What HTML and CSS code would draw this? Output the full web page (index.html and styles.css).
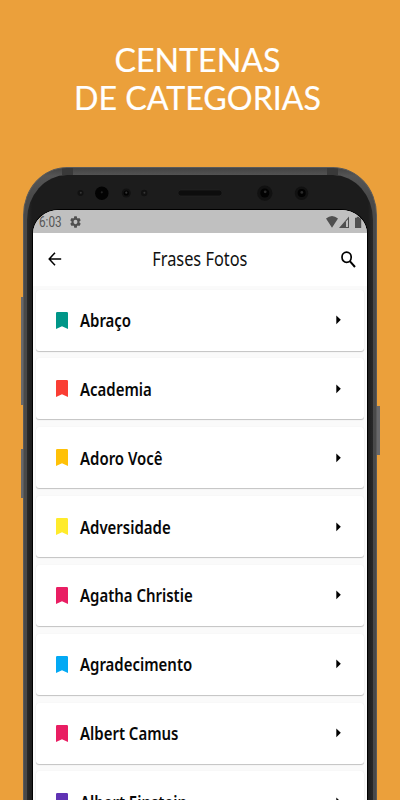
FILE: index.html
```
<!DOCTYPE html>
<html lang="pt-BR">
<head>
<meta charset="utf-8">
<title>Frases Fotos</title>
<link rel="stylesheet" href="styles.css">
</head>
<body>
<svg class="defs" aria-hidden="true">
  <symbol id="bookmark" viewBox="0 0 12 17"><path d="M1.2 0H10.8Q12 0 12 1.2V17L6 14.3L0 17V1.2Q0 0 1.2 0Z" fill="currentColor"/></symbol>
  <symbol id="caret" viewBox="0 0 5 10"><path d="M0.3 0.4L4.8 4.8L0.3 9.2Z" fill="#000"/></symbol>
</svg>
<main class="promo">
  <h1 class="headline">CENTENAS<br>DE CATEGORIAS</h1>
  <div class="phone">
    <i class="button volume"></i><i class="button assist"></i><i class="button power"></i>
    <div class="shell">
      <div class="bezel">
        <svg class="sensors" width="348" height="34" viewBox="26 176 348 34">
          <g fill="#111"><circle cx="80.5" cy="193" r="3"/><circle cx="101.8" cy="193.3" r="6.7" fill="#030303"/><circle cx="126.3" cy="193" r="4.5"/><circle cx="144.2" cy="193" r="3.2"/><circle cx="264.8" cy="193.2" r="7.6"/><circle cx="301.5" cy="193.2" r="6.7"/></g>
          <rect x="178" y="190" width="44" height="6" rx="3" fill="#0d0d0d" stroke="#252525" stroke-width=".6"/>
          <g fill="#020202"><circle cx="264.8" cy="193" r="4.5"/><circle cx="301.7" cy="193" r="4"/><circle cx="126.3" cy="193" r="2.6"/></g>
          <g fill="#363636"><circle cx="80.8" cy="192.8" r="1"/><circle cx="101.8" cy="192.3" r="1.1" fill="#222"/><circle cx="126.3" cy="192.7" r="1.1"/><circle cx="144.4" cy="192.8" r="1"/><circle cx="265.2" cy="191.8" r="1.4" fill="#2b2b2b"/><circle cx="301.8" cy="192.4" r="1.4" fill="#2b2b2b"/></g>
        </svg>
        <div class="screen">
          <div class="status">
            <span class="time">6:03</span>
            <svg class="gear" width="11" height="12" viewBox="2 2 20 20" preserveAspectRatio="none"><path fill="#505050" d="M19.14 12.94c.04-.3.06-.61.06-.94s-.02-.64-.07-.94l2.03-1.58a.49.49 0 0 0 .12-.61l-1.92-3.32a.49.49 0 0 0-.59-.22l-2.39.96a7 7 0 0 0-1.62-.94l-.36-2.54a.48.48 0 0 0-.48-.41h-3.84a.47.47 0 0 0-.47.41l-.36 2.54c-.59.24-1.13.57-1.62.94l-2.39-.96a.48.48 0 0 0-.59.22L2.74 8.87a.47.47 0 0 0 .12.61l2.03 1.58a6 6 0 0 0 0 1.88l-2.03 1.58a.49.49 0 0 0-.12.61l1.92 3.32c.12.22.37.29.59.22l2.39-.96c.5.38 1.03.7 1.62.94l.36 2.54c.05.24.24.41.48.41h3.84c.24 0 .44-.17.47-.41l.36-2.54a7 7 0 0 0 1.62-.94l2.39.96c.22.08.47 0 .59-.22l1.92-3.32a.47.47 0 0 0-.12-.61zM12 15.6a3.6 3.6 0 1 1 0-7.2 3.6 3.6 0 0 1 0 7.2z"/></svg>
            <svg class="signals" width="36" height="13" viewBox="326 215 36 13"><path fill="#505050" d="M326 217.5Q332 212.5 338 217.5L332 226.7ZM349 215.5V227H339Z"/><path fill="#c0c0c0" d="M346 220.5L348 218.2V226H346Z"/><path fill="#505050" d="M355 216.8h1.8v-1h2.6v1h1.8V227H355Z"/></svg>
          </div>
          <header class="appbar">
            <svg width="14" height="14" viewBox="0 0 14 14"><path d="M13.2 7H1.3M7 .7L1.2 7L7 13.3" fill="none" stroke="#000" stroke-width="1.5"/></svg>
            <h2><span>Frases Fotos</span></h2>
            <svg width="15" height="17" viewBox="0 0 15 17"><ellipse cx="5.6" cy="6.3" rx="4.6" ry="5.1" fill="none" stroke="#000" stroke-width="1.7"/><path d="M8.8 10.1L14 16" stroke="#000" stroke-width="2"/></svg>
          </header>
          <ul class="list">
            <li class="card"><svg class="mark teal"><use href="#bookmark"/></svg><span class="name">Abraço</span><svg class="caret"><use href="#caret"/></svg></li>
            <li class="card"><svg class="mark red"><use href="#bookmark"/></svg><span class="name">Academia</span><svg class="caret"><use href="#caret"/></svg></li>
            <li class="card"><svg class="mark amber"><use href="#bookmark"/></svg><span class="name">Adoro Você</span><svg class="caret"><use href="#caret"/></svg></li>
            <li class="card"><svg class="mark yellow"><use href="#bookmark"/></svg><span class="name">Adversidade</span><svg class="caret"><use href="#caret"/></svg></li>
            <li class="card"><svg class="mark pink"><use href="#bookmark"/></svg><span class="name">Agatha Christie</span><svg class="caret"><use href="#caret"/></svg></li>
            <li class="card"><svg class="mark blue"><use href="#bookmark"/></svg><span class="name">Agradecimento</span><svg class="caret"><use href="#caret"/></svg></li>
            <li class="card"><svg class="mark pink"><use href="#bookmark"/></svg><span class="name">Albert Camus</span><svg class="caret"><use href="#caret"/></svg></li>
            <li class="card"><svg class="mark purple"><use href="#bookmark"/></svg><span class="name">Albert Einstein</span><svg class="caret"><use href="#caret"/></svg></li>
          </ul>
        </div>
      </div>
    </div>
  </div>
</main>
</body>
</html>
```
FILE: styles.css
```
* { box-sizing: border-box; }
html, body { margin: 0; height: 100%; overflow: hidden; }
.defs { position: absolute; width: 0; height: 0; }
.promo { height: 800px; background: #eba03b; overflow: hidden; }
.headline {
  margin: 0; padding: 41px 5px 0 0; height: 167px;
  font: 400 32.2px/38px Lato, sans-serif; color: #fff; text-align: center;
  -webkit-text-stroke: .2px #fff;
}
.phone { position: relative; width: 354.4px; margin-left: 23px; }
.button { position: absolute; width: 4px; background: #68686a; }
.volume { left: -2.5px; top: 130px; height: 108px; }
.assist { left: -2.5px; top: 282px; height: 49px; }
.power { right: -2.5px; top: 239px; height: 49px; }
.shell {
  position: relative; height: 760px; padding: 7px 3px 0 2.5px;
  border: 1px solid #5a5a5a; border-radius: 44px 44px 0 0 / 48px 48px 0 0;
  background: linear-gradient(90deg, transparent 38px, #393939 38px 49px, transparent 49px 303px, #393939 303px 314px, transparent 314px) top / 100% 7px no-repeat,
    linear-gradient(#434343, #555 8px, #494949 30px);
}
.bezel {
  height: 752px; padding: 1px 6px 0;
  border-radius: 40px 40px 0 0 / 45px 45px 0 0;
  background: linear-gradient(90deg, #292929, #1c1c1c 5px, #1c1c1c 341px, #292929);
  overflow: hidden;
}
.sensors { display: block; height: 34px; margin-left: -6.5px; }
.screen {
  height: 720px; background: #fafafa; overflow: hidden;
  border-radius: 26px 26px 0 0 / 24px 24px 0 0; box-shadow: 0 0 0 1px #000;
}
.status { height: 23px; background: #c0c0c0; display: flex; align-items: center; padding: 1px 5px 0 6px; }
.time { font: 400 14px/20px Roboto, sans-serif; color: #565656; width: 31px; transform: scaleX(.84); transform-origin: left; }
.signals { margin-left: auto; }
.appbar { height: 53px; background: #fff; display: flex; align-items: center; padding: 0 11px 1px 15px; }
.appbar h2 { flex: 1; margin: 0; text-align: center; font: 400 19px/28px "Noto Sans", sans-serif; color: #111; }
.appbar h2 span { display: inline-block; transform: translateX(-1.5px) scaleX(.86); }
.list { list-style: none; margin: 0; padding: 3.5px 3px 0; display: flex; flex-direction: column; gap: 7.85px; }
.card {
  height: 61px; flex: none; display: flex; align-items: center; padding: 0 23px 0 20px;
  background: #fff; border-radius: 3px;
  box-shadow: 0 1px 1px rgba(0,0,0,.22), 0 0 1px rgba(0,0,0,.08);
}
.mark { width: 12px; height: 17px; margin-right: 12px; }
.name { flex: 1; font: 600 17px/24px "Noto Sans", sans-serif; color: #080808; transform: translateY(.5px) scaleX(.88); transform-origin: left; white-space: nowrap; }
.caret { width: 5px; height: 10px; }
.teal { color: #009688; }
.red { color: #fa3e34; }
.amber { color: #ffc107; }
.yellow { color: #ffeb2b; }
.pink { color: #e91e63; }
.blue { color: #03a9f4; }
.purple { color: #6033b4; }
```
